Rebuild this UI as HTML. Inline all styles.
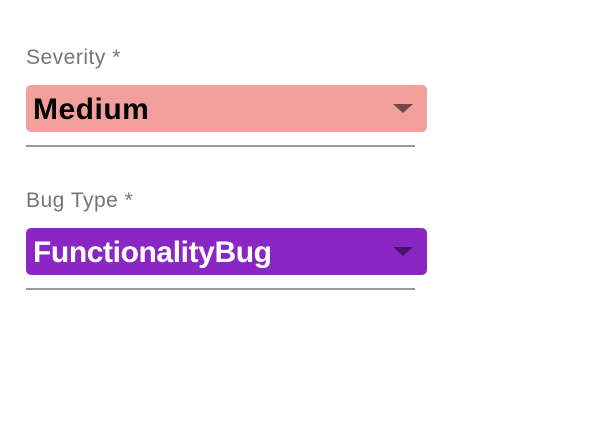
<!DOCTYPE html>
<html><head><style>
body{margin:0;width:590px;height:448px;background:#fff;font-family:"Liberation Sans",sans-serif;position:relative;overflow:hidden}
.lbl{position:absolute;left:26px;font-size:21px;color:#757575;line-height:24px;letter-spacing:0.5px}
.box{position:absolute;left:26px;width:401px;height:47px;border-radius:5px}
.txt{position:absolute;left:7px;top:7px;font-size:30px;font-weight:bold;line-height:36px}
.arr{position:absolute;left:367px;top:19px;width:0;height:0;border-left:10px solid transparent;border-right:10px solid transparent;border-top:9px solid}
.line{position:absolute;left:26px;width:389px;height:2px;background:#999}
</style></head><body>
<div class="lbl" style="top:46px">Severity *</div>
<div class="box" style="top:85px;background:#f29f9c"><div class="txt" style="color:#000;letter-spacing:0.5px">Medium</div><div class="arr" style="border-top-color:#704848"></div></div>
<div class="line" style="top:145px"></div>
<div class="lbl" style="top:189px">Bug Type *</div>
<div class="box" style="top:228px;background:#8a27c4"><div class="txt" style="color:#fff;letter-spacing:-0.4px">FunctionalityBug</div><div class="arr" style="border-top-color:#471568"></div></div>
<div class="line" style="top:288px"></div>
</body></html>
